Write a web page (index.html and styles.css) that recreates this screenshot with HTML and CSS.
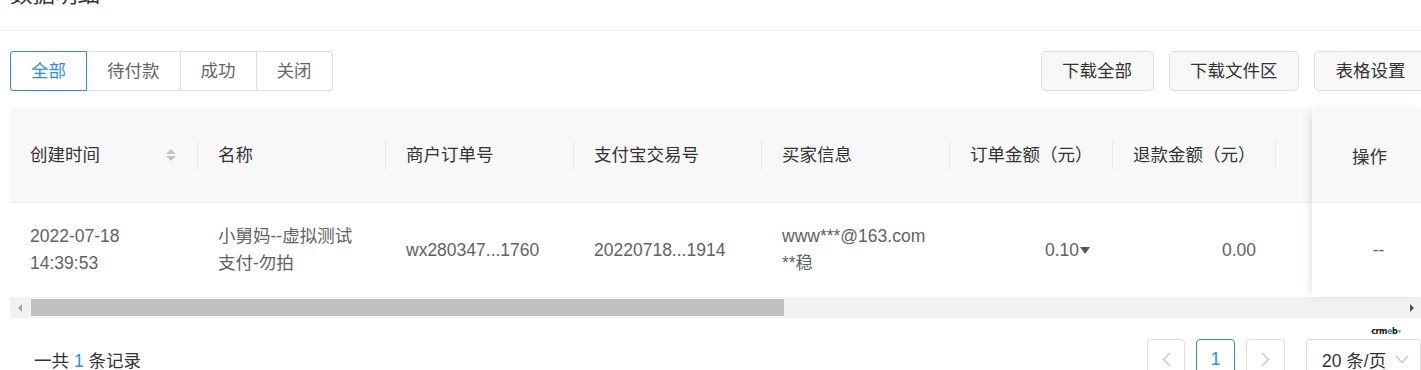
FILE: index.html
```html
<!DOCTYPE html>
<html lang="zh-CN">
<head>
<meta charset="utf-8">
<title>数据明细</title>
<link rel="stylesheet" href="styles.css">
</head>
<body>
<div class="page-head"><h2 class="page-title">数据明细</h2></div>
<div class="content">
  <div class="toolbar">
    <div class="tabs">
      <button class="tab tab-active">全部</button>
      <button class="tab">待付款</button>
      <button class="tab">成功</button>
      <button class="tab">关闭</button>
    </div>
    <div class="actions">
      <button class="btn">下载全部</button>
      <button class="btn">下载文件区</button>
      <button class="btn">表格设置</button>
    </div>
  </div>

  <div class="table">
    <div class="table-main">
      <div class="thead">
        <div class="th th-sort"><span>创建时间</span><span class="sort"><i class="sort-up"></i><i class="sort-down"></i></span></div>
        <div class="th">名称</div>
        <div class="th">商户订单号</div>
        <div class="th">支付宝交易号</div>
        <div class="th">买家信息</div>
        <div class="th th-mid">订单金额（元）</div>
        <div class="th th-mid">退款金额（元）</div>
        <div class="th th-mid"></div>
      </div>
      <div class="tbody">
        <div class="td">2022-07-18<br>14:39:53</div>
        <div class="td">小舅妈--虚拟测试支付-勿拍</div>
        <div class="td">wx280347...1760</div>
        <div class="td">20220718...1914</div>
        <div class="td">www***@163.com<br>**稳</div>
        <div class="td td-mid td-num td-amount">0.10<i class="caret"></i></div>
        <div class="td td-mid td-num">0.00</div>
        <div class="td td-mid"></div>
      </div>
    </div>
    <div class="table-fixed">
      <div class="th-fixed">操作</div>
      <div class="td-fixed">--</div>
    </div>
  </div>

  <div class="hscroll">
    <div class="hs-btn"><i class="hs-left"></i></div>
    <div class="hs-track"><div class="hs-thumb"></div></div>
    <div class="hs-btn"><i class="hs-right"></i></div>
  </div>

  <div class="footer">
    <div class="total">一共 <span class="total-num">1</span> 条记录</div>
    <div class="pager">
      <span class="brand">cr<b>m</b><span class="brand-e">e</span>b<sup>®</sup></span>
      <button class="pg pg-prev"><svg width="9" height="15" viewBox="0 0 9 15"><polyline points="8,1 1.5,7.5 8,14" fill="none" stroke="#c5c8ce" stroke-width="1.3"/></svg></button>
      <button class="pg pg-cur">1</button>
      <button class="pg pg-next"><svg width="9" height="15" viewBox="0 0 9 15"><polyline points="1,1 7.5,7.5 1,14" fill="none" stroke="#c5c8ce" stroke-width="1.3"/></svg></button>
      <div class="pg-size"><span>20 条/页</span><svg width="14" height="9" viewBox="0 0 14 9"><polyline points="1,1 7,7.5 13,1" fill="none" stroke="#c5c8ce" stroke-width="1.3"/></svg></div>
    </div>
  </div>
</div>
</body>
</html>
```

FILE: styles.css
```css
* { box-sizing: border-box; }

html, body {
  margin: 0;
  padding: 0;
  background: #fff;
}

body {
  font-family: "Liberation Sans", "Noto Sans CJK SC", sans-serif;
  font-size: 17.5px;
  color: #333;
  overflow: hidden;
  width: 1421px;
}

button {
  font-family: inherit;
  font-size: inherit;
  cursor: pointer;
}

.page-head {
  display: flow-root;
  height: 31px;
  border-bottom: 1px solid #e8eaec;
  padding-left: 10px;
}

.page-title {
  margin: -17px 0 0;
  font-size: 22.5px;
  font-weight: normal;
  line-height: 24px;
  color: #333;
}

.content {
  padding-left: 10px;
  width: 1421px;
}

/* toolbar */
.toolbar {
  display: flex;
  align-items: center;
  justify-content: space-between;
  margin-top: 20px;
  margin-right: -6px;
  height: 40px;
}

.tabs {
  display: flex;
}

.tab {
  height: 40px;
  padding: 0 20px;
  border: 1px solid #dcdee2;
  background: #fff;
  color: #666;
  line-height: 38px;
  margin-left: -1px;
}

.tab:first-child {
  margin-left: 0;
  border-radius: 3px 0 0 3px;
}

.tab:last-child {
  border-radius: 0 3px 3px 0;
}

.tab-active {
  position: relative;
  z-index: 1;
  border-color: #2d8cf0;
  color: #2d8cf0;
}

.actions {
  display: flex;
  gap: 15px;
}

.btn {
  height: 40px;
  padding: 0 20.5px;
  border: 1px solid #dcdee2;
  border-radius: 5px;
  background: #f8f8f8;
  color: #333;
  line-height: 38px;
}

/* table */
.table {
  display: flex;
  margin-top: 17px;
  width: 1411px;
}

.table-main {
  flex: 1;
  overflow: hidden;
  min-width: 0;
}

.thead,
.tbody {
  display: flex;
}

.thead {
  height: 95px;
  background: #f8f8f9;
  border-bottom: 1px solid #ebeef5;
}

.tbody {
  height: 94px;
  background: #fff;
}

.th,
.td {
  flex: none;
  width: 188px;
  display: flex;
  align-items: center;
}

.th-mid,
.td-mid {
  width: 163px;
}

.th {
  padding-left: 20px;
  color: #333;
  line-height: 24px;
  white-space: nowrap;
}

.th::after {
  content: "";
  margin-left: auto;
  width: 1px;
  height: 28px;
  background: #e8eaec;
}

.th-sort .sort {
  margin-left: auto;
  display: flex;
  flex-direction: column;
  gap: 2px;
  margin-right: 21px;
}

.th-sort::after {
  margin-left: 0;
}

.sort-up,
.sort-down {
  display: block;
  width: 0;
  height: 0;
  border-left: 5px solid transparent;
  border-right: 5px solid transparent;
}

.sort-up {
  border-bottom: 5px solid #c0c4cc;
}

.sort-down {
  border-top: 5px solid #c0c4cc;
}

.td {
  padding: 0 20px;
  color: #606266;
  line-height: 27px;
}

.td-num {
  justify-content: flex-end;
}

.td-amount {
  padding-right: 23px;
}

.caret {
  display: inline-block;
  width: 0;
  height: 0;
  margin-left: 1px;
  border-left: 5px solid transparent;
  border-right: 5px solid transparent;
  border-top: 7px solid #555;
}

.table-fixed {
  flex: none;
  width: 109px;
  position: relative;
  z-index: 1;
  box-shadow: -4px 0 9px -3px rgba(0, 0, 0, 0.13);
}

.th-fixed {
  height: 95px;
  background: #f8f8f9;
  border-bottom: 1px solid #ebeef5;
  display: flex;
  align-items: center;
  justify-content: center;
  padding-left: 6px;
  color: #333;
}

.td-fixed {
  height: 94px;
  background: #fff;
  display: flex;
  align-items: center;
  justify-content: center;
  padding-left: 24px;
  color: #606266;
}

/* horizontal scrollbar */
.hscroll {
  display: flex;
  height: 21px;
  width: 1411px;
  background: #f1f1f1;
}

.hs-btn {
  flex: none;
  width: 21px;
  display: flex;
  align-items: center;
  justify-content: center;
}

.hs-left,
.hs-right {
  display: block;
  width: 0;
  height: 0;
  border-top: 4px solid transparent;
  border-bottom: 4px solid transparent;
}

.hs-left {
  border-right: 4px solid #a3a3a3;
  margin-left: -1px;
}

.hs-right {
  border-left: 4px solid #505050;
  margin-left: 2px;
}

.hs-track {
  flex: 1;
  display: flex;
  align-items: center;
}

.hs-thumb {
  width: 753px;
  height: 17px;
  background: #c1c1c1;
}

/* footer */
.footer {
  display: flex;
  align-items: center;
  justify-content: space-between;
  margin-top: 21px;
  height: 40px;
  width: 1411px;
}

.total {
  padding-left: 24px;
  color: #333;
}

.total-num {
  color: #2d8cf0;
}

.pager {
  display: flex;
  align-items: center;
  position: relative;
}

.brand {
  position: absolute;
  right: 20px;
  top: -12px;
  font-family: "DejaVu Sans", sans-serif;
  font-size: 8px;
  font-weight: bold;
  letter-spacing: -0.4px;
  line-height: 10px;
  color: #111;
}

.brand b {
  font-weight: bold;
}

.brand-e {
  color: #2d8cf0;
}

.brand sup {
  font-size: 4px;
  vertical-align: top;
  font-weight: normal;
}

.pg {
  height: 40px;
  width: 39px;
  padding: 0;
  border: 1px solid #dcdee2;
  border-radius: 4px;
  background: #fff;
  color: #333;
  display: flex;
  align-items: center;
  justify-content: center;
  margin-left: 11px;
}

.pg-prev {
  width: 38px;
  margin-left: 0;
}

.pg-cur {
  border-color: #2d8cf0;
  color: #2d8cf0;
}

.pg-size {
  margin-left: 21px;
  width: 115px;
  height: 40px;
  border: 1px solid #dcdee2;
  border-radius: 4px;
  display: flex;
  align-items: center;
  justify-content: space-between;
  padding: 0 11px 0 15px;
  color: #333;
  white-space: nowrap;
}
```
